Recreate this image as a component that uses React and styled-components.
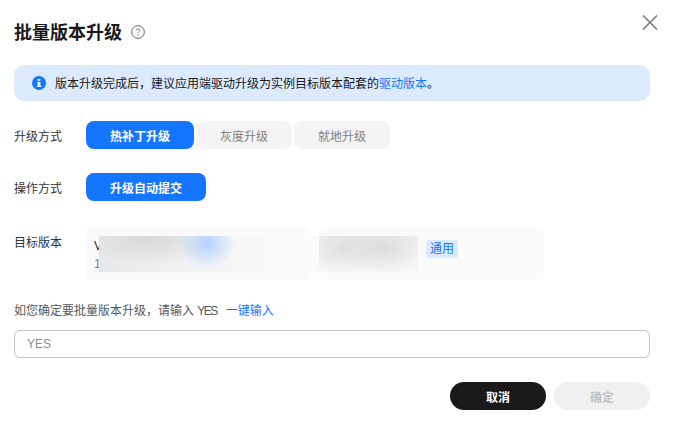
import React from 'react'
import styled, { createGlobalStyle } from 'styled-components'

const GlobalStyle = createGlobalStyle`
    html, body {
        margin: 0;
        padding: 0;
        background: #fff;
    }
    body {
        font-family: "Liberation Sans", "Noto Sans CJK SC", sans-serif;
        font-size: 12px;
        color: #252b3a;
    }
    * {
        box-sizing: border-box;
    }
`

const Dialog = styled.div`
    position: relative;
    width: 673px;
    height: 422px;
    padding: 21px 23px 0 14px;
    overflow: hidden;
    background: #fff;
`

const CloseButton = styled.button`
    position: absolute;
    top: 15px;
    right: 15px;
    width: 16px;
    height: 15px;
    padding: 0;
    border: 0;
    background: none;
    display: flex;

    svg {
        width: 16px;
        height: 15px;
    }
`

const Header = styled.div`
    display: flex;
    align-items: center;
    height: 24px;
    gap: 9px;
`

const Title = styled.h2`
    margin: 0;
    font-size: 18px;
    line-height: 24px;
    font-weight: 700;
    color: #1a1a1a;
`

const HelpIcon = styled.svg`
    width: 14px;
    height: 14px;
    margin-top: -2px;
`

const Alert = styled.div`
    display: flex;
    align-items: center;
    gap: 9px;
    height: 36px;
    margin-top: 20px;
    padding: 0 18px;
    border-radius: 10px;
    background: #dbeafe;
    line-height: 18px;
    color: #191919;

    svg {
        width: 14px;
        height: 14px;
        flex: none;
    }
    span {
        padding-top: 2px;
    }
`

const Link = styled.a`
    color: #1476ff;
    text-decoration: none;
`

const Row = styled.div`
    display: flex;
    align-items: ${p => p.$top ? 'flex-start' : 'center'};
    margin-top: ${p => p.$gap}px;
`

const Label = styled.div`
    width: 72px;
    flex: none;
    line-height: 18px;
    color: #333;
    padding-top: ${p => p.$top ? 7 : 3}px;
`

const Options = styled.div`
    display: flex;
    gap: 2px;
`

const Option = styled.button`
    width: ${p => p.$width}px;
    height: 28px;
    padding: 0;
    border: 0;
    border-radius: 8px;
    font: inherit;
    font-weight: ${p => p.$active ? 700 : 400};
    color: ${p => p.$active ? '#fff' : '#808080'};
    background: ${p => p.$active ? '#1476ff' : '#f4f4f4'};
`

const Versions = styled.div`
    display: flex;
    gap: 8px;
`

const VersionCard = styled.div`
    position: relative;
    width: 225px;
    height: 53px;
    padding: 10px 8px;
    border-radius: 6px;
    background: #fafafa;
    line-height: 18px;
`

const VersionName = styled.div`
    color: #252b3a;
`

const VersionSub = styled.div`
    color: #4a8f9c;
`

const BlurPatch = styled.div`
    position: absolute;
    z-index: 1;
    top: 9px;
    height: 36px;
    left: ${p => p.$left}px;
    width: ${p => p.$width}px;
    background: ${p => p.$bg};
`

const Tag = styled.span`
    position: absolute;
    top: 13px;
    left: 107px;
    width: 32px;
    height: 18px;
    border-radius: 3px;
    background: #dbeafe;
    color: #1476ff;
    text-align: center;
    line-height: 18px;
`

const Hint = styled.div`
    margin-top: 22px;
    line-height: 18px;
    color: #595959;
    display: flex;
    gap: 9px;
`

const HintCode = styled.span`
    letter-spacing: -1.5px;
`

const Input = styled.input`
    display: block;
    width: 100%;
    height: 28px;
    margin-top: 10px;
    padding: 0 12px;
    border: 1px solid #c2c2c2;
    border-radius: 6px;
    outline: none;
    font: inherit;
    color: #333;

    &::placeholder {
        color: #8c8c8c;
        opacity: 1;
    }
`

const Footer = styled.div`
    display: flex;
    justify-content: flex-end;
    gap: 8px;
    margin-top: 24px;
`

const FooterButton = styled.button`
    width: 96px;
    height: 28px;
    padding: 0;
    border: 0;
    border-radius: 14px;
    font: inherit;
    font-weight: 700;
    color: ${p => p.disabled ? '#c2c2c2' : '#fff'};
    background: ${p => p.disabled ? '#f0f0f0' : '#191919'};
`

const patchOne = `
    radial-gradient(ellipse 28px 26px at 108px 7px, #b4d2fe 0%, rgba(180, 210, 254, 0) 100%),
    radial-gradient(ellipse 70px 30px at 50px 0px, #d6d7d8 0%, rgba(214, 215, 216, 0) 100%),
    linear-gradient(90deg, #e6e7e8 0%, #f2f3f3 45%, #fafafa 90%)
`

const patchTwo = `
    radial-gradient(ellipse 44px 26px at 62px 12px, #dcdcdc 0%, rgba(220, 220, 220, 0) 100%),
    radial-gradient(ellipse 40px 28px at 24px 12px, #e0e1e2 0%, rgba(224, 225, 226, 0) 100%),
    linear-gradient(180deg, #eeeeee 0%, #f8f8f8 100%)
`

function App() {
    return (
        <Dialog>
            <GlobalStyle />
            <CloseButton aria-label="close">
                <svg viewBox="0 0 16 15" fill="none" stroke="#808080" strokeWidth="1.7">
                    <path d="M1 .5l14 14M15 .5L1 14.5" />
                </svg>
            </CloseButton>

            <Header>
                <Title>批量版本升级</Title>
                <HelpIcon viewBox="0 0 15 15" fill="none">
                    <circle cx="7.5" cy="7.5" r="6.8" stroke="#595959" strokeWidth="1" />
                    <path d="M5.7 5.9c0-1 .8-1.7 1.8-1.7s1.8.7 1.8 1.6c0 1.3-1.8 1.4-1.8 2.8" stroke="#595959" strokeWidth="1" />
                    <circle cx="7.5" cy="10.6" r=".7" fill="#595959" />
                </HelpIcon>
            </Header>

            <Alert>
                <svg viewBox="0 0 14 14">
                    <circle cx="7" cy="7" r="7" fill="#1476ff" />
                    <path d="M5.6 3h2.8v1.8H5.6zM5.2 6h3.2v3.8h.9V11H4.8V9.8h1V7.2h-.6z" fill="#fff" />
                </svg>
                <span>版本升级完成后，建议应用端驱动升级为实例目标版本配套的<Link>驱动版本</Link>。</span>
            </Alert>

            <Row $gap={20}>
                <Label>升级方式</Label>
                <Options>
                    <Option $active $width={108}>热补丁升级</Option>
                    <Option $width={96}>灰度升级</Option>
                    <Option $width={96}>就地升级</Option>
                </Options>
            </Row>

            <Row $gap={24}>
                <Label>操作方式</Label>
                <Option $active $width={120}>升级自动提交</Option>
            </Row>

            <Row $gap={26} $top>
                <Label $top>目标版本</Label>
                <Versions>
                    <VersionCard>
                        <VersionName>V</VersionName>
                        <VersionSub>1</VersionSub>
                        <BlurPatch $left={13} $width={220} $bg={patchOne} />
                    </VersionCard>
                    <VersionCard>
                        <BlurPatch $left={0} $width={99} $bg={patchTwo} />
                        <Tag>通用</Tag>
                    </VersionCard>
                </Versions>
            </Row>

            <Hint>
                <span>如您确定要批量版本升级，请输入 <HintCode>YES</HintCode></span>
                <Link>一键输入</Link>
            </Hint>

            <Input placeholder="YES" />

            <Footer>
                <FooterButton>取消</FooterButton>
                <FooterButton disabled>确定</FooterButton>
            </Footer>
        </Dialog>
    )
}

export default App
